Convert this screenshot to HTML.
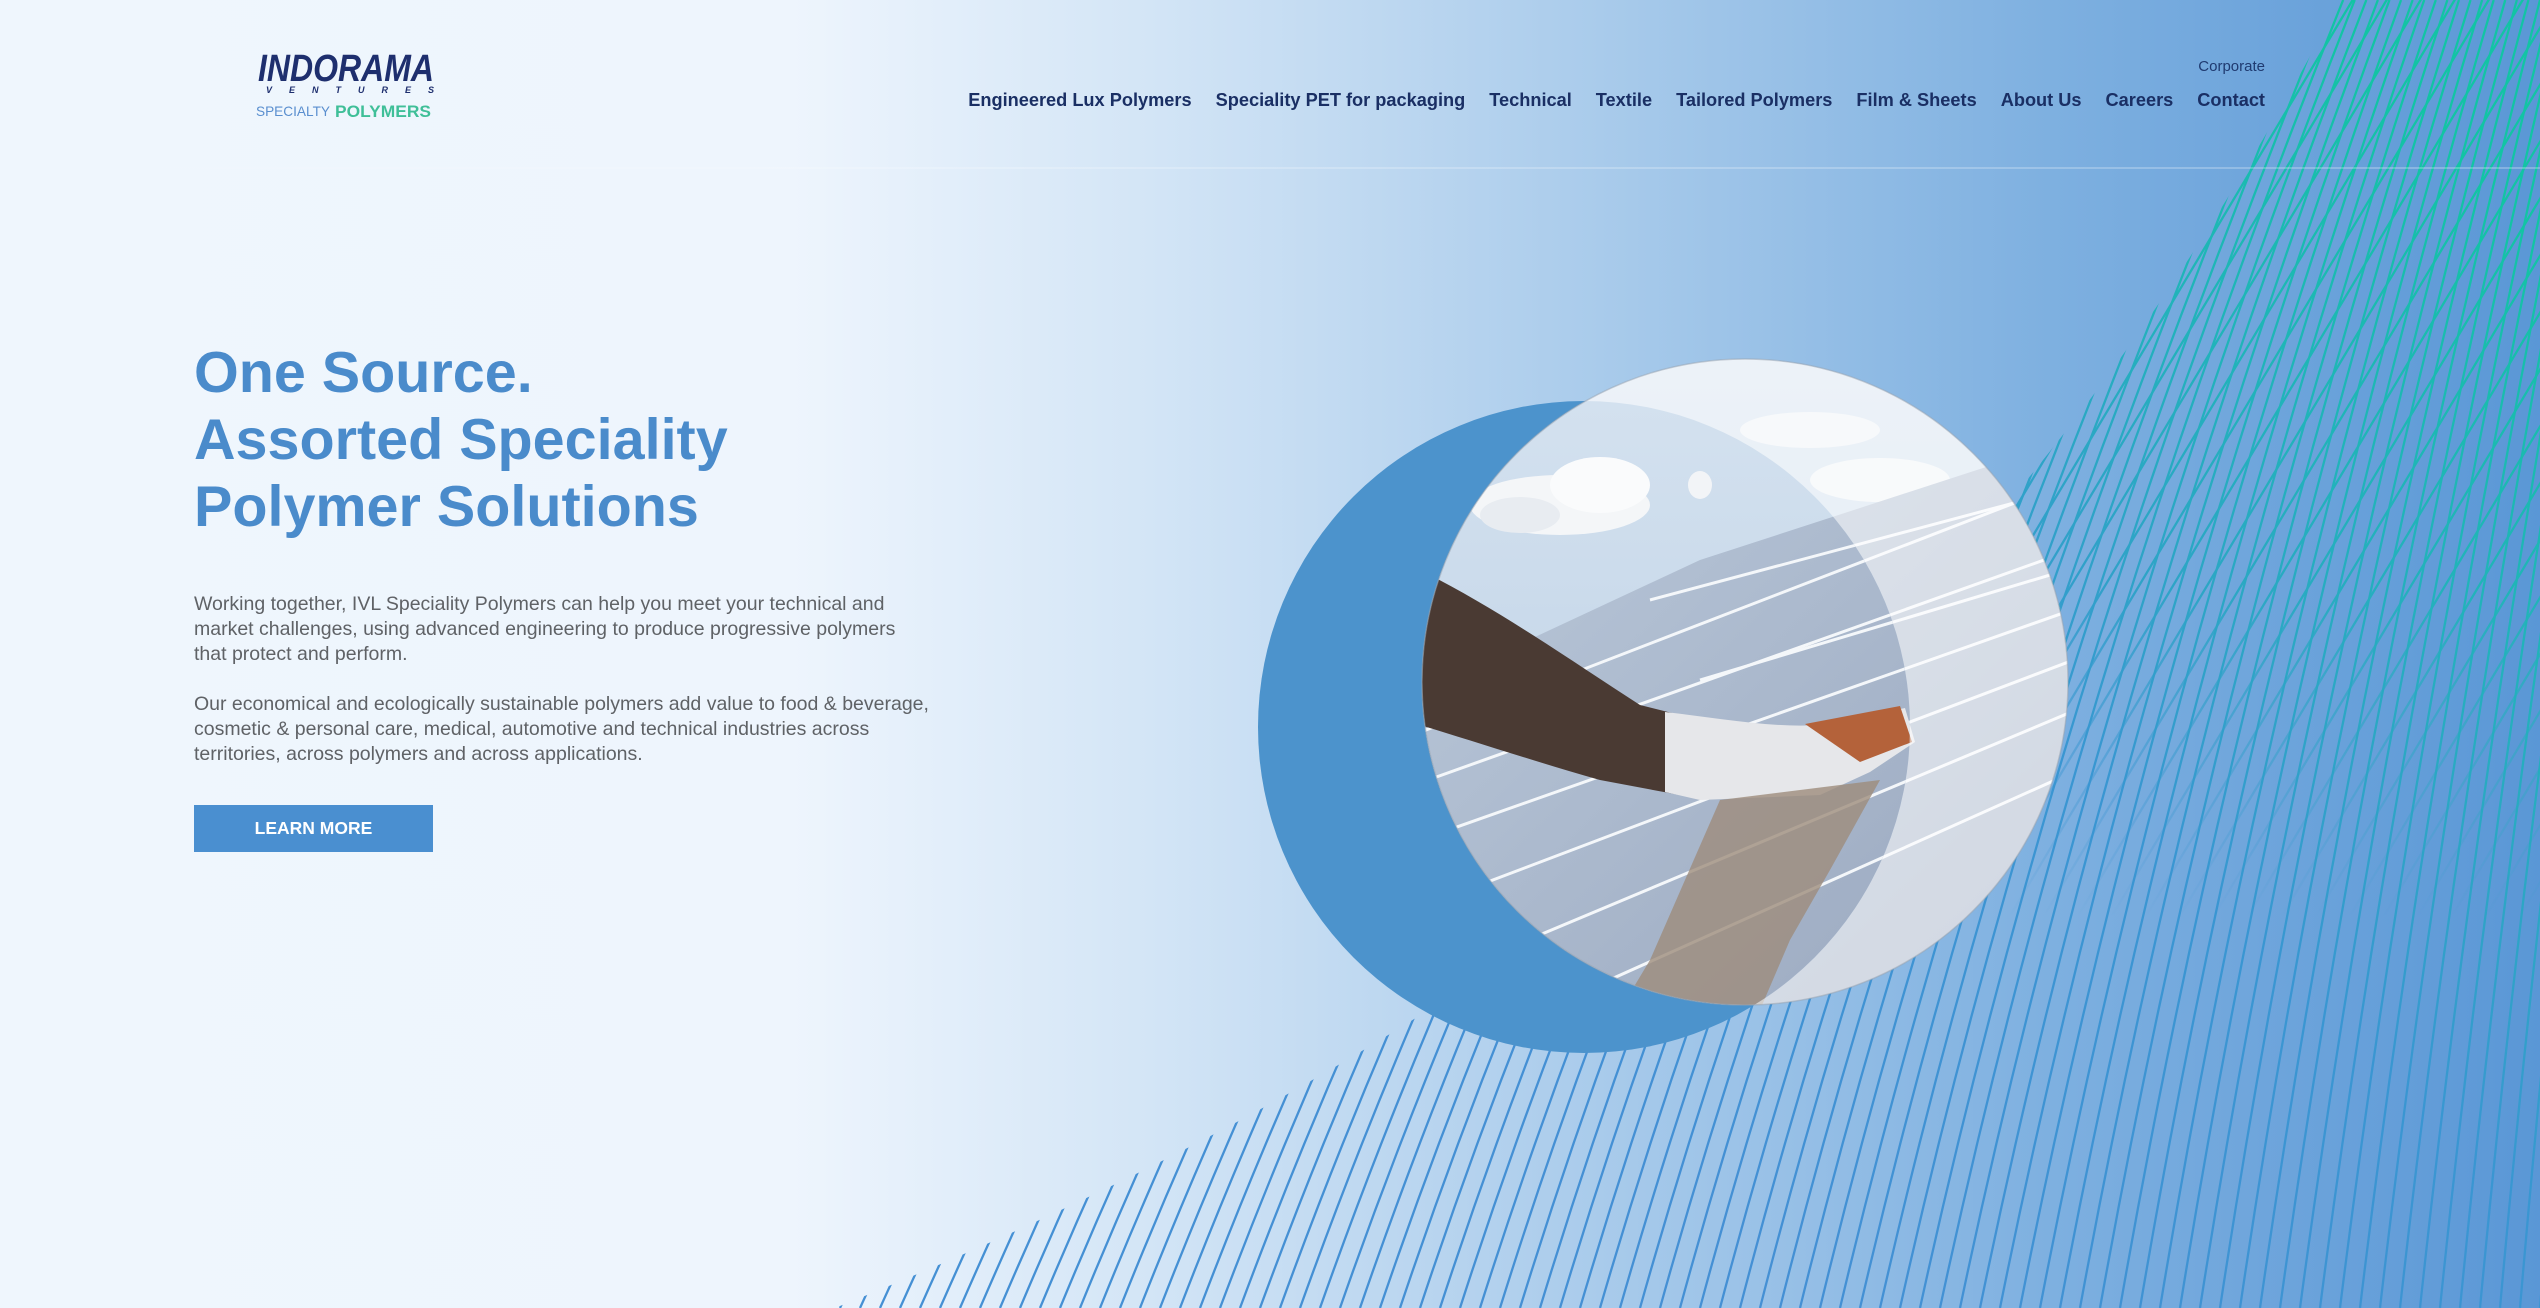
<!DOCTYPE html>
<html><head><meta charset="utf-8">
<style>
*{margin:0;padding:0;box-sizing:border-box}
html,body{width:2540px;height:1308px;overflow:hidden}
body{position:relative;font-family:"Liberation Sans",sans-serif;background:linear-gradient(90deg,#eff6fd 0px,#eef5fd 790px,#d3e5f6 1150px,#a9cbeb 1600px,#7eb0e0 2050px,#5a97d6 2540px)}
#bg{position:absolute;left:0;top:0}
.logo{position:absolute;left:256px;top:46px;width:190px}
.nav{position:absolute;right:275px;top:90px;display:flex;gap:24px;font-weight:bold;font-size:18.2px;color:#1a2f64;white-space:nowrap}
.corp{position:absolute;right:275px;top:58px;font-size:15px;color:#1f3a70}
.hline{position:absolute;left:0;top:167px;width:2540px;height:2px;background:linear-gradient(90deg,rgba(255,255,255,0),rgba(255,255,255,.2) 40%,rgba(255,255,255,.25))}
h1{position:absolute;left:194px;top:340px;font-size:57.5px;line-height:67px;color:#4a8bcb;font-weight:bold}
.p{position:absolute;left:194px;font-size:19.5px;line-height:25px;color:#5f6266}
.btn{position:absolute;left:194px;top:805px;width:239px;height:47px;background:#4a8fd0;color:#fff;font-weight:bold;font-size:17.5px;display:flex;align-items:center;justify-content:center}
</style></head><body>
<svg id="bg" width="2540" height="1308" viewBox="0 0 2540 1308">
<defs>
<linearGradient id="lg" gradientUnits="userSpaceOnUse" x1="1500" y1="1000" x2="2400" y2="100">
<stop offset="0" stop-color="#4590d4"/><stop offset=".45" stop-color="#3a96d2"/><stop offset=".75" stop-color="#22b2bb"/><stop offset="1" stop-color="#12c4a4"/></linearGradient>
<linearGradient id="fadeG" gradientUnits="userSpaceOnUse" x1="0" y1="0" x2="0" y2="1308"><stop offset="0" stop-color="#fff"/><stop offset=".45" stop-color="#fff"/><stop offset=".7" stop-color="#000"/></linearGradient>
<mask id="fade" maskUnits="userSpaceOnUse" x="0" y="0" width="2540" height="1308"><rect width="2540" height="1308" fill="url(#fadeG)"/></mask>
<clipPath id="env"><path d="M835 1308 C1400 1080 1950 750 2340 0 L2540 0 L2540 1308 Z"/></clipPath>
<clipPath id="cb"><circle cx="1584" cy="727" r="326"/></clipPath>
<clipPath id="cp"><circle cx="1745" cy="682" r="323"/></clipPath>
<linearGradient id="sky" x1="0" y1="0" x2="0" y2="1"><stop offset="0" stop-color="#d6e3f0"/><stop offset="1" stop-color="#b8cde3"/></linearGradient>
<linearGradient id="pan" x1="0" y1="0" x2="1" y2="1"><stop offset="0" stop-color="#bccadb"/><stop offset="1" stop-color="#95a3bb"/></linearGradient>
<g id="photo">
<rect x="1400" y="340" width="700" height="700" fill="url(#sky)"/>
<ellipse cx="1560" cy="505" rx="90" ry="30" fill="#f4f6f8"/>
<ellipse cx="1600" cy="485" rx="50" ry="28" fill="#fafbfc"/>
<ellipse cx="1520" cy="515" rx="40" ry="18" fill="#e8ecf1"/>
<ellipse cx="1700" cy="485" rx="12" ry="14" fill="#f2f4f7"/>
<ellipse cx="1810" cy="430" rx="70" ry="18" fill="#eef2f6"/>
<ellipse cx="1880" cy="480" rx="70" ry="22" fill="#f0f3f6"/>
<path d="M1400 700 L1700 560 L2100 430 L2100 1100 L1400 1100 Z" fill="url(#pan)"/>
<g stroke="#f4f7fa" stroke-width="3" fill="none">
<path d="M1400 740 L2100 470"/><path d="M1400 790 L2100 540"/><path d="M1420 840 L2100 600"/><path d="M1440 900 L2100 650"/><path d="M1480 960 L2100 700"/><path d="M1650 600 L2100 480"/><path d="M1700 680 L2100 560"/><path d="M1520 1020 L2100 760"/>
</g>
<path d="M1420 570 C1500 610 1570 660 1640 705 L1680 715 L1680 795 L1600 780 C1530 760 1470 740 1420 725 Z" fill="#4a3a33"/>
<path d="M1665 712 C1720 718 1780 730 1830 724 L1905 708 L1915 742 L1870 772 L1820 795 L1700 800 L1665 792 Z" fill="#e6e7ea"/>
<path d="M1805 724 L1900 706 L1912 742 L1860 762 Z" fill="#b4623a"/>
<path d="M1720 800 L1880 780 L1830 870 L1790 940 L1760 1010 L1620 1010 L1650 960 Z" fill="#9d8c7c" opacity=".8"/>
</g>
</defs>
<g clip-path="url(#env)" stroke="url(#lg)" stroke-width="2.3" fill="none" id="lines"></g>
<circle cx="1584" cy="727" r="326" fill="#4c93cc"/>
<g clip-path="url(#cp)"><use href="#photo"/><rect x="1400" y="340" width="700" height="700" fill="#fff" opacity=".55"/></g>
<g clip-path="url(#cb)"><g clip-path="url(#cp)"><use href="#photo"/></g></g>
<circle cx="1745" cy="682" r="323" fill="none" stroke="#9aa4b0" stroke-width="1.5" opacity=".5"/>
</svg>
<script>
var g=document.getElementById('lines'),s='';
for(var x=760;x<2700;x+=20){var f=(x-760)/1900;var k=900-f*800;
 s+='<path d="M'+x+' 1308 Q'+(x+k*0.35)+' 650 '+(x+k)+' 0"/>';}
var m='';
for(var x=1300;x<3600;x+=34){m+='<path d="M'+x+' 1308 L'+(x+900)+' -200"/>';}
g.innerHTML=s+'<g mask="url(#fade)">'+m+'</g>';
</script>
<div class="hline"></div>
<svg class="logo" width="190" height="76" viewBox="0 0 190 76">
<text x="2" y="35" font-family="Liberation Sans" font-weight="bold" font-style="italic" font-size="38" fill="#1e2f6e" textLength="176" lengthAdjust="spacingAndGlyphs">INDORAMA</text>
<text x="10" y="47" font-family="Liberation Sans" font-weight="bold" font-style="italic" font-size="9" fill="#1e2f6e" textLength="168" lengthAdjust="spacing">VENTURES</text>
<text x="0" y="70" font-family="Liberation Sans" font-size="14" fill="#5a8fcf" textLength="74" lengthAdjust="spacingAndGlyphs">SPECIALTY</text>
<text x="79" y="71" font-family="Liberation Sans" font-weight="bold" font-size="17" fill="#3fbf98" textLength="96" lengthAdjust="spacingAndGlyphs">POLYMERS</text>
</svg>
<div class="corp">Corporate</div>
<div class="nav"><span>Engineered Lux Polymers</span><span>Speciality PET for packaging</span><span>Technical</span><span>Textile</span><span>Tailored Polymers</span><span>Film &amp; Sheets</span><span>About Us</span><span>Careers</span><span>Contact</span></div>
<h1>One Source.<br>Assorted Speciality<br>Polymer Solutions</h1>
<div class="p" style="top:592px;width:736px">Working together, IVL Speciality Polymers can help you meet your technical and market challenges, using advanced engineering to produce progressive polymers that protect and perform.</div>
<div class="p" style="top:692px;width:760px">Our economical and ecologically sustainable polymers add value to food &amp; beverage, cosmetic &amp; personal care, medical, automotive and technical industries across territories, across polymers and across applications.</div>
<div class="btn">LEARN MORE</div>
</body></html>
